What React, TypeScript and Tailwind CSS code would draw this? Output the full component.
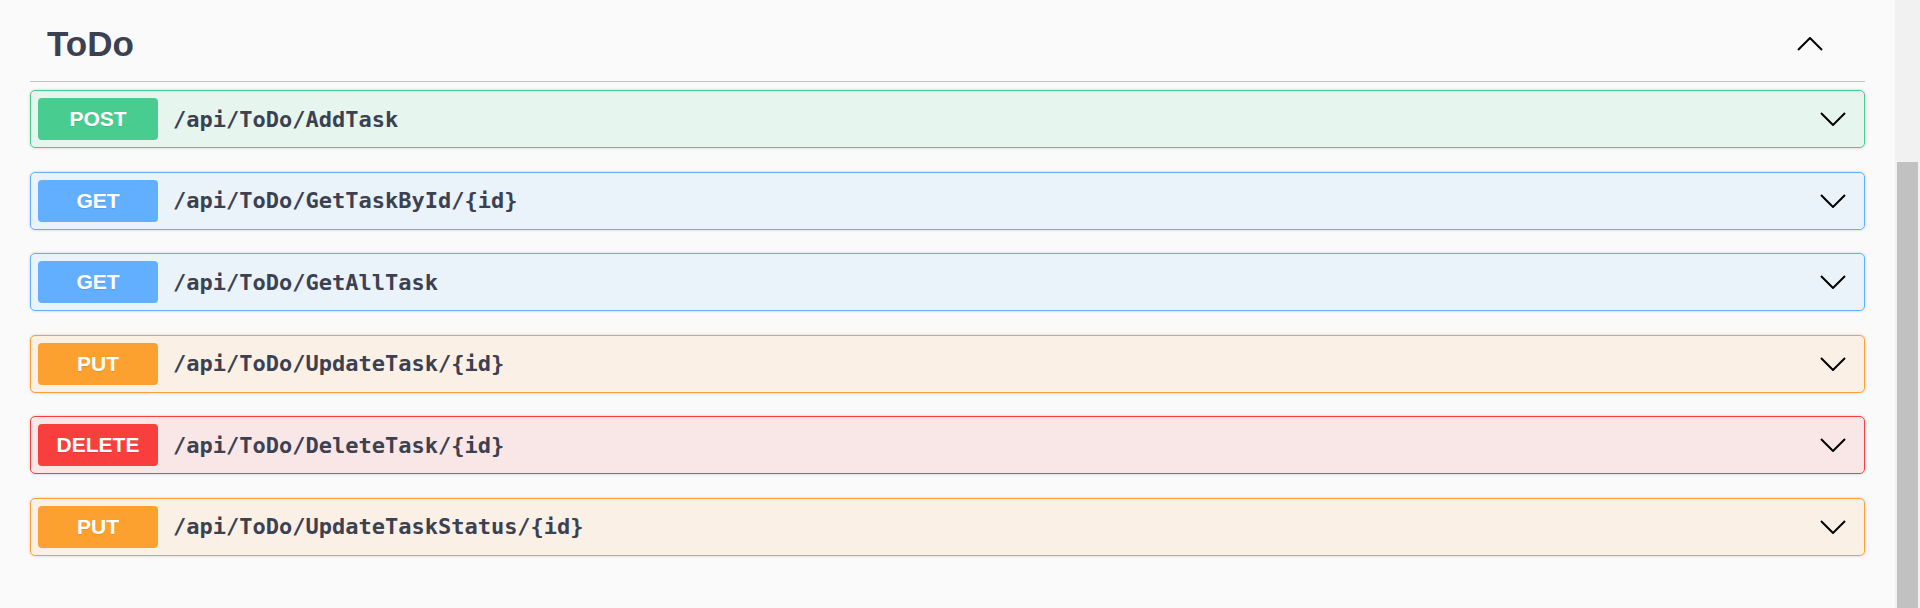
const endpoints = [
  { method: "POST", path: "/api/ToDo/AddTask", badge: "bg-[#49cc90]", row: "border-[#49cc90] bg-[#49cc90]/10" },
  { method: "GET", path: "/api/ToDo/GetTaskById/{id}", badge: "bg-[#61affe]", row: "border-[#61affe] bg-[#61affe]/10" },
  { method: "GET", path: "/api/ToDo/GetAllTask", badge: "bg-[#61affe]", row: "border-[#61affe] bg-[#61affe]/10" },
  { method: "PUT", path: "/api/ToDo/UpdateTask/{id}", badge: "bg-[#fca130]", row: "border-[#fca130] bg-[#fca130]/10" },
  { method: "DELETE", path: "/api/ToDo/DeleteTask/{id}", badge: "bg-[#f93e3e]", row: "border-[#f93e3e] bg-[#f93e3e]/10" },
  { method: "PUT", path: "/api/ToDo/UpdateTaskStatus/{id}", badge: "bg-[#fca130]", row: "border-[#fca130] bg-[#fca130]/10" },
];

function Chevron({ up }: { up?: boolean }) {
  return (
    <svg width="26" height="14" viewBox="0 0 26 14" fill="none">
      <polyline
        points={up ? "1,13 13,1 25,13" : "1,1 13,13 25,1"}
        stroke="#000"
        strokeWidth="2"
        strokeLinejoin="miter"
      />
    </svg>
  );
}

function App() {
  return (
    <div className="flex h-[608px] w-full overflow-hidden bg-[#fafafa]">
      <div className="flex-1 px-[30px]">
        <div className="flex items-center pt-[24px] pb-[18px] pl-[17px] pr-[42px] border-b border-[#3b4151]/30">
          <h4 className="flex-1 text-[35px] leading-[39px] font-bold text-[#3b4151] font-['Liberation_Sans',Arial,sans-serif]">
            ToDo
          </h4>
          <Chevron up />
        </div>

        <div className="mt-[8px] flex flex-col gap-[23.5px]">
          {endpoints.map((e, i) => (
            <div
              key={i}
              className={`flex items-center h-[58px] border rounded-[5px] pl-[7px] pr-[18px] shadow-[0_0_3px_rgba(0,0,0,0.19)] ${e.row}`}
            >
              <span
                className={`w-[120px] h-[42px] flex items-center justify-center rounded-[4px] text-white font-bold text-[21px] font-['Liberation_Sans',Arial,sans-serif] [text-shadow:0_1px_0_rgba(0,0,0,0.1)] ${e.badge}`}
              >
                {e.method}
              </span>
              <span className="flex-1 pl-[15px] text-[22px] font-bold text-[#3b4151] font-['DejaVu_Sans_Mono',monospace]">
                {e.path}
              </span>
              <Chevron />
            </div>
          ))}
        </div>
      </div>

      <div className="w-[25px] bg-[#f1f1f1] pl-[2px] pr-[2px]">
        <div className="mt-[162px] h-[460px] bg-[#c1c1c1]" />
      </div>
    </div>
  );
}

export default App;
